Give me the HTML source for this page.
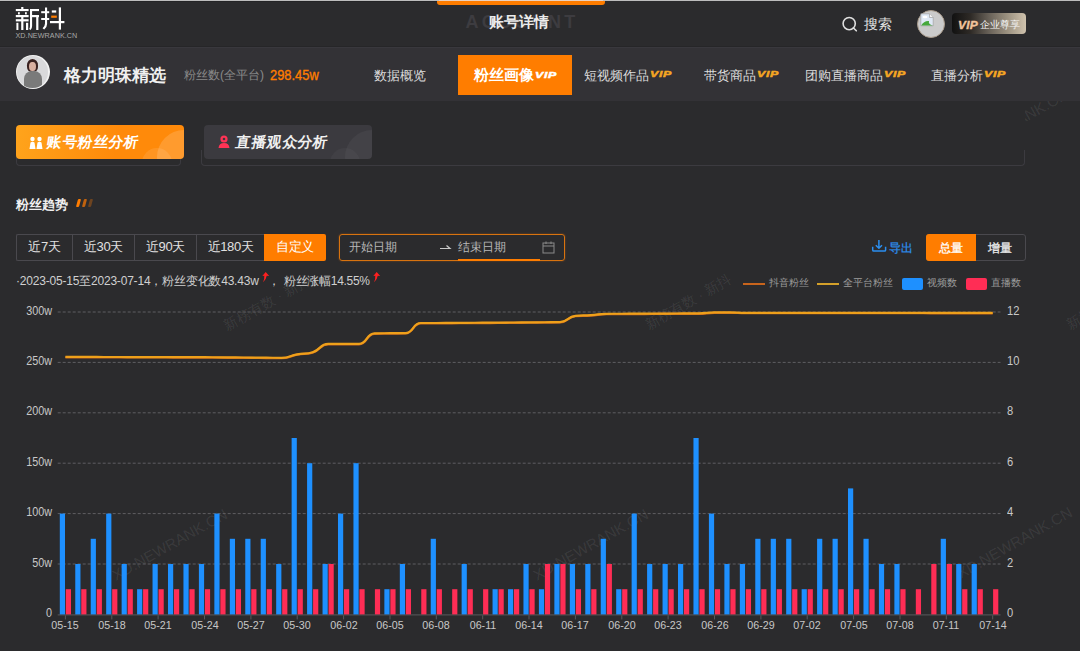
<!DOCTYPE html>
<html><head><meta charset="utf-8">
<style>
*{margin:0;padding:0;box-sizing:border-box}
html,body{width:1080px;height:651px;overflow:hidden;background:#2b2b2d;font-family:"Liberation Sans",sans-serif;color:#ddd}
.a{position:absolute;white-space:nowrap}
#top{position:absolute;left:0;top:0;width:1080px;height:47px;background:#2b2b2d;border-bottom:1px solid #262628}
#topline{position:absolute;left:0;top:0;width:1080px;height:1px;background:#bdbdbd}
#nav{position:absolute;left:0;top:47px;width:1080px;height:54px;background:#333236;border-top:1px solid #39383d}
.vip{display:inline-block;position:relative;top:-2.5px;font-style:italic;font-weight:bold;color:#f5a623;font-size:9.5px;letter-spacing:0.5px;-webkit-text-stroke:0.5px currentColor;transform:scaleX(1.3);transform-origin:0 50%;margin-left:1px}
.navi{position:absolute;top:66.5px;font-size:13.3px;line-height:18px;color:#dcdcdc}
.yl{position:absolute;left:0;width:52px;text-align:right;font-size:12px;line-height:14px;color:#c8c8c8;transform:scaleX(0.9);transform-origin:100% 50%}
.yr{position:absolute;left:1007px;font-size:12px;line-height:14px;color:#c8c8c8;transform:scaleX(0.93);transform-origin:0 50%}
.xl{position:absolute;top:618px;width:40px;text-align:center;font-size:11.5px;line-height:14px;color:#c8c8c8;transform:scaleX(0.93)}
.btn{position:absolute;top:234px;height:27px;font-size:13px;line-height:25px;text-align:center;color:#e0e0e0;letter-spacing:-0.35px}
.leg{position:absolute;top:276.3px;font-size:10px;line-height:13px;color:#9c9c9c}
.wm{position:absolute;color:rgba(255,255,255,0.07);font-size:14px;transform:rotate(-35deg);transform-origin:0 0;white-space:nowrap}
</style></head><body>
<div id="top"></div>
<div id="topline"></div>
<!-- logo -->
<svg class="a" style="left:0;top:0" width="80" height="45" viewBox="0 0 80 45" fill="#fff">
<rect x="21.2" y="7" width="2.2" height="2.5"/>
<rect x="15.8" y="9" width="12.8" height="2.1"/>
<rect x="18" y="12.2" width="1.8" height="2.2"/>
<rect x="25" y="12.2" width="1.8" height="2.2"/>
<rect x="15.8" y="15" width="12.8" height="2.2"/>
<rect x="15.8" y="19.2" width="12.8" height="2.2"/>
<rect x="21.2" y="17" width="2.2" height="13"/>
<rect x="16.4" y="22.8" width="2" height="7.2"/>
<rect x="26" y="22.8" width="2.2" height="7.2"/>
<rect x="30" y="9" width="9" height="2.1"/>
<path d="M30 9 H32.1 V26 Q32.1 28.5 30.6 30 L29.2 29 Q30 27.8 30 26z"/>
<rect x="32" y="15" width="7" height="2.2"/>
<rect x="36.2" y="17" width="2.2" height="13"/>
<rect x="41.2" y="11.2" width="8" height="2"/>
<rect x="41.2" y="18" width="8" height="2"/>
<path d="M45 7.4 H47.1 V24 Q47.1 27 44.2 29.6 L42.6 28.2 Q45 26 45 23.5z"/>
<rect x="51.8" y="10.4" width="4.4" height="2.2"/>
<rect x="51.2" y="15.6" width="5.6" height="2.2" fill="#ff7d00"/>
<rect x="50" y="21" width="14.4" height="2.2"/>
<rect x="58.8" y="7.4" width="2.2" height="22.2"/>
</svg>
<div class="a" style="left:15.5px;top:31.5px;font-size:7.2px;line-height:8px;color:#a8a8a8;letter-spacing:0.05px">XD.NEWRANK.CN</div>
<!-- center title -->
<div class="a" style="left:437px;top:0.5px;width:168px;height:4.5px;background:#ff7d00;border-radius:0 0 3px 3px"></div>
<div class="a" style="left:0;top:0;width:1080px;height:1px;background:#bdbdbd"></div>
<div class="a" style="left:439px;top:0;width:164px;height:1px;background:#ecd2bf"></div>
<div class="a" style="left:0;top:1px;width:437px;height:1px;background:#242426"></div>
<div class="a" style="left:465.5px;top:12.3px;font-size:18px;line-height:21px;font-weight:bold;color:#3d3c40;letter-spacing:3.3px">ACCOUNT</div>
<div class="a" style="left:488.5px;top:12px;font-size:15px;line-height:20px;font-weight:bold;color:#ebebeb">账号详情</div>
<!-- search -->
<svg class="a" style="left:840px;top:15px" width="20" height="20" viewBox="0 0 20 20"><circle cx="9.2" cy="8.6" r="6.1" fill="none" stroke="#e0e0e0" stroke-width="1.6"/><line x1="13.5" y1="13" x2="16.3" y2="15.8" stroke="#e0e0e0" stroke-width="1.6" stroke-linecap="round"/></svg>
<div class="a" style="left:864px;top:15px;font-size:14px;line-height:18px;color:#e0e0e0">搜索</div>
<div class="a" style="left:917px;top:10px;width:28px;height:28px;border-radius:50%;background:#cbcbcb;border:1px solid #a89a8a"></div>
<svg class="a" style="left:920px;top:13px" width="15" height="15" viewBox="0 0 15 15"><path d="M0.8 0.8 H9.5 L13.2 4.5 V12.8 H0.8z" fill="#dfe9f5" stroke="#a0a0a0" stroke-width="0.7"/><path d="M9.5 0.8 V4.5 H13.2" fill="#f4f4f4" stroke="#a0a0a0" stroke-width="0.7"/><path d="M1.2 12.5 Q4 7.5 9 8 Q8 11 12.8 12.5z" fill="#46a83c"/><ellipse cx="5" cy="4" rx="2.5" ry="1.2" fill="#fff"/></svg>
<div class="a" style="left:952px;top:13px;width:74px;height:21px;border-radius:4px;background:linear-gradient(90deg,#111 0%,#2e2a26 25%,#686158 50%,#9c9281 75%,#cfc2ad 100%)"></div>
<div class="a" style="left:957.5px;top:18.5px;font-size:11px;line-height:13px;font-weight:bold;font-style:italic;color:#f2c49c;-webkit-text-stroke:0.4px #f2c49c;letter-spacing:0.2px;transform:scaleX(1.08);transform-origin:0 50%">VIP</div>
<div class="a" style="left:979.5px;top:18px;font-size:9.8px;line-height:13px;color:#f2f2f2">企业尊享</div>

<!-- nav -->
<div id="nav"></div>
<div class="a" style="left:15.5px;top:55px;width:34px;height:34px;border-radius:50%;background:#f2f2f2"></div>
<div class="a" style="left:16.8px;top:56.3px;width:31.4px;height:31.4px;border-radius:50%;background:#d9d9db;overflow:hidden">
  <div style="position:absolute;left:9.8px;top:3px;width:11.5px;height:13px;border-radius:50% 50% 40% 40%;background:#3a2220"></div>
  <div style="position:absolute;left:12.5px;top:5.5px;width:6.5px;height:9.5px;border-radius:50%;background:#d9b0a0"></div>
  <div style="position:absolute;left:7.5px;top:14.5px;width:18px;height:20px;border-radius:8px 8px 2px 2px;background:#7a7a7a"></div>
</div>
<div class="a" style="left:63.5px;top:65.3px;font-size:16.8px;line-height:22px;font-weight:bold;color:#f0f0f0">格力明珠精选</div>
<div class="a" style="left:184px;top:67px;font-size:12px;line-height:16px;color:#8a8a8a">粉丝数(全平台)</div>
<div class="a" style="left:269.5px;top:67px;font-size:14px;line-height:17px;color:#ff7d00;-webkit-text-stroke:0.35px #ff7d00;transform:scaleX(0.92);transform-origin:0 50%">298.45w</div>

<div class="navi" style="left:374px">数据概览</div>
<div class="a" style="left:458px;top:54.5px;width:113.5px;height:40.5px;background:#ff7d00"></div>
<div class="a" style="left:474px;top:65px;font-size:15px;line-height:20px;font-weight:bold;color:#fff">粉丝画像<span class="vip" style="color:#fff">VIP</span></div>
<div class="navi" style="left:584px">短视频作品<span class="vip">VIP</span></div>
<div class="navi" style="left:704px">带货商品<span class="vip">VIP</span></div>
<div class="navi" style="left:805px">团购直播商品<span class="vip">VIP</span></div>
<div class="navi" style="left:931px">直播分析<span class="vip">VIP</span></div>

<!-- watermarks -->
<div class="a" style="left:0;top:101px;width:1080px;height:550px;overflow:hidden"><svg style="position:absolute;left:0;top:-101px" width="1080" height="651" viewBox="0 0 1080 651" font-family="Liberation Sans, sans-serif" fill="rgba(255,255,255,0.085)">
<text x="116" y="581" font-size="15.2" transform="rotate(-29.4 116 581)">XD.NEWRANK.CN</text>
<text x="537" y="581" font-size="15.2" transform="rotate(-29.4 537 581)">XD.NEWRANK.CN</text>
<text x="961" y="579" font-size="15.2" transform="rotate(-29.4 961 579)">XD.NEWRANK.CN</text>
<text x="957" y="161" font-size="15.2" transform="rotate(-29.4 957 161)">XD.NEWRANK.CN</text>
<text x="227.5" y="330.5" font-size="14" transform="rotate(-29.5 227.5 330.5)">新榜有数 · 新抖</text>
<text x="648.5" y="330" font-size="14" transform="rotate(-29.5 648.5 330)">新榜有数 · 新抖</text>
<text x="1069.5" y="330" font-size="14" transform="rotate(-29.5 1069.5 330)">新榜有数 · 新抖</text>
</svg></div>
<div class="a" style="left:0;top:101px;width:1025px;height:65px;background:#2b2b2d"></div>
<!-- tabs -->
<div class="a" style="left:201px;top:150px;width:824px;height:16px;border:1px solid #3c3b40;border-top:none;border-radius:0 0 4px 4px"></div>
<div class="a" style="left:16px;top:150px;width:165px;height:16px;border:1px solid #3c3b40;border-top:none;border-radius:0 0 4px 4px"></div>
<div class="a" style="left:16px;top:125px;width:168px;height:34px;border-radius:4px;background:linear-gradient(100deg,#ffa41c 0%,#ff8a0a 60%,#ff8a0a 100%);overflow:hidden">
  <div style="position:absolute;left:141px;top:5px;width:54px;height:54px;border-radius:50%;background:rgba(255,255,255,0.15)"></div>
  <div style="position:absolute;left:126px;top:23px;width:30px;height:30px;border-radius:50%;background:rgba(255,255,255,0.10)"></div>
</div>
<svg class="a" style="left:29px;top:135.5px" width="14" height="16" viewBox="0 0 14 16"><circle cx="3.5" cy="3" r="2.2" fill="#fff"/><circle cx="10.5" cy="3" r="2.2" fill="#fff"/><path d="M0.5 13 L1.5 6.5 Q3.5 5 5.5 6.5 L6.5 13z" fill="#fff"/><path d="M7.5 13 L8.5 6.5 Q10.5 5 12.5 6.5 L13.5 13z" fill="#fff"/></svg>
<div class="a" style="left:47px;top:132px;font-size:14.6px;line-height:20px;font-weight:900;color:#fff;letter-spacing:0.45px;transform:skewX(-9deg)">账号粉丝分析</div>
<div class="a" style="left:204px;top:125px;width:168px;height:34px;border-radius:4px;background:#3b3a3f;overflow:hidden">
  <div style="position:absolute;left:141px;top:5px;width:54px;height:54px;border-radius:50%;background:rgba(255,255,255,0.045)"></div>
  <div style="position:absolute;left:126px;top:23px;width:30px;height:30px;border-radius:50%;background:rgba(255,255,255,0.03)"></div>
</div>
<svg class="a" style="left:218px;top:135px" width="12" height="14" viewBox="0 0 12 14"><circle cx="6" cy="4" r="3.6" fill="#ff3355"/><circle cx="6" cy="4" r="1.3" fill="#3b3a3f"/><path d="M0.5 13 Q1 8 6 8 Q11 8 11.5 13z" fill="#ff3355"/></svg>
<div class="a" style="left:235.5px;top:132px;font-size:14.6px;line-height:20px;font-weight:900;color:#f0f0f0;letter-spacing:0.45px;transform:skewX(-9deg)">直播观众分析</div>

<!-- section title -->
<div class="a" style="left:16px;top:196px;font-size:13.2px;line-height:17px;font-weight:bold;color:#f0f0f0">粉丝趋势</div>
<div class="a" style="left:77px;top:199px;width:3px;height:8px;background:#ff7d00;transform:skewX(-15deg);border-radius:1px"></div>
<div class="a" style="left:83px;top:199px;width:3px;height:8px;background:#c0620e;transform:skewX(-15deg);border-radius:1px"></div>
<div class="a" style="left:89px;top:199px;width:3px;height:8px;background:#6e4420;transform:skewX(-15deg);border-radius:1px"></div>

<!-- date buttons -->
<div class="a" style="left:16px;top:234px;width:248px;height:27px;border:1px solid #4a494e;border-right:none;border-radius:2px 0 0 2px"></div>
<div class="a" style="left:72px;top:235px;width:1px;height:25px;background:#4a494e"></div>
<div class="a" style="left:134px;top:235px;width:1px;height:25px;background:#4a494e"></div>
<div class="a" style="left:196px;top:235px;width:1px;height:25px;background:#4a494e"></div>
<div class="btn" style="left:17px;width:55px">近7天</div>
<div class="btn" style="left:73px;width:61px">近30天</div>
<div class="btn" style="left:135px;width:61px">近90天</div>
<div class="btn" style="left:197px;width:67px">近180天</div>
<div class="btn" style="left:264px;width:62px;background:#ff7d00;color:#fff;border-radius:0 2px 2px 0">自定义</div>
<div class="a" style="left:339px;top:234px;width:226px;height:27px;border:1px solid #d8730f;border-radius:3px;box-shadow:0 0 2px rgba(255,125,0,0.45)"></div>
<div class="a" style="left:349px;top:240px;font-size:12px;line-height:15px;color:#b8b8b8">开始日期</div>
<svg class="a" style="left:438px;top:243px" width="14" height="8" viewBox="0 0 14 8"><path d="M2 5.5 H12 L8.5 2.5" fill="none" stroke="#c8c8c8" stroke-width="1.2"/></svg>
<div class="a" style="left:458px;top:240px;font-size:12px;line-height:15px;color:#b8b8b8">结束日期</div>
<div class="a" style="left:458px;top:259.2px;width:82px;height:2px;background:#ff7d00"></div>
<svg class="a" style="left:542px;top:241px" width="13" height="13" viewBox="0 0 13 13"><rect x="1" y="2" width="11" height="10" fill="none" stroke="#8a8a8a" stroke-width="1"/><line x1="1" y1="5" x2="12" y2="5" stroke="#8a8a8a"/><line x1="4" y1="0.5" x2="4" y2="3" stroke="#8a8a8a"/><line x1="9" y1="0.5" x2="9" y2="3" stroke="#8a8a8a"/></svg>

<div class="a" style="left:16px;top:273.5px;font-size:12px;line-height:15px;color:#d0d0d0;letter-spacing:-0.2px">·2023-05-15至2023-07-14，粉丝变化数43.43w</div>
<svg class="a" style="left:262px;top:271.5px" width="8" height="11" viewBox="0 0 8 11"><path d="M3.7 0 L7.2 3.9 L4.7 3.7 Q4.3 7.6 1.1 10.2 Q2.5 7.3 2.3 3.7 L0.3 3.9z" fill="#ff2020"/></svg>
<div class="a" style="left:268px;top:273.5px;font-size:12px;line-height:15px;color:#d0d0d0">，</div>
<div class="a" style="left:284px;top:273.5px;font-size:12px;line-height:15px;color:#d0d0d0;letter-spacing:-0.3px">粉丝涨幅14.55%</div>
<svg class="a" style="left:373px;top:271.5px" width="8" height="11" viewBox="0 0 8 11"><path d="M3.7 0 L7.2 3.9 L4.7 3.7 Q4.3 7.6 1.1 10.2 Q2.5 7.3 2.3 3.7 L0.3 3.9z" fill="#ff2020"/></svg>

<!-- export / total -->
<svg class="a" style="left:870px;top:238px" width="18" height="16" viewBox="0 0 18 16"><path d="M8.9 2 V10.2 M5.8 7.2 L8.9 10.2 L12 7.2" fill="none" stroke="#2b8ff0" stroke-width="1.5" stroke-linejoin="round"/><path d="M2.7 8.8 V12 Q2.7 13.1 3.8 13.1 H14.5 Q15.6 13.1 15.6 12 V8.8" fill="none" stroke="#2b8ff0" stroke-width="1.5"/></svg>
<div class="a" style="left:888.5px;top:240.5px;font-size:12px;line-height:15px;-webkit-text-stroke:0.25px #2b8ff0;color:#2b8ff0">导出</div>
<div class="a" style="left:926px;top:234px;width:100px;height:27px;border:1px solid #4a494e;border-radius:3px"></div>
<div class="a" style="left:926px;top:234px;width:50px;height:27px;background:#ff7d00;border-radius:3px 0 0 3px"></div>
<div class="a" style="left:939px;top:241px;font-size:12px;line-height:15px;-webkit-text-stroke:0.3px #fff;color:#fff">总量</div>
<div class="a" style="left:988px;top:241px;font-size:12px;line-height:15px;-webkit-text-stroke:0.3px #f0f0f0;color:#f0f0f0">增量</div>

<!-- legend -->
<div class="a" style="left:743px;top:283px;width:22px;height:2px;background:#c8641c"></div>
<div class="leg" style="left:769px">抖音粉丝</div>
<div class="a" style="left:817px;top:283px;width:22px;height:2px;background:#d4a02a"></div>
<div class="leg" style="left:843px">全平台粉丝</div>
<div class="a" style="left:902px;top:278px;width:21px;height:12px;background:#1e90ff;border-radius:2px"></div>
<div class="leg" style="left:927px">视频数</div>
<div class="a" style="left:966px;top:278px;width:21px;height:12px;background:#ff2d55;border-radius:2px"></div>
<div class="leg" style="left:991px">直播数</div>

<!-- chart -->
<svg class="a" style="left:0;top:0" width="1080" height="651" viewBox="0 0 1080 651">
<line x1="57.7" y1="564.0" x2="1000.5" y2="564.0" stroke="#5f5e62" stroke-width="1" stroke-dasharray="3,2"/>
<line x1="57.7" y1="513.6" x2="1000.5" y2="513.6" stroke="#5f5e62" stroke-width="1" stroke-dasharray="3,2"/>
<line x1="57.7" y1="463.2" x2="1000.5" y2="463.2" stroke="#5f5e62" stroke-width="1" stroke-dasharray="3,2"/>
<line x1="57.7" y1="412.8" x2="1000.5" y2="412.8" stroke="#5f5e62" stroke-width="1" stroke-dasharray="3,2"/>
<line x1="57.7" y1="362.4" x2="1000.5" y2="362.4" stroke="#5f5e62" stroke-width="1" stroke-dasharray="3,2"/>
<line x1="57.7" y1="312.0" x2="1000.5" y2="312.0" stroke="#5f5e62" stroke-width="1" stroke-dasharray="3,2"/>
<line x1="57.7" y1="614.9" x2="1000.5" y2="614.9" stroke="#5a595d" stroke-width="1"/>
<line x1="65.4" y1="615.4" x2="65.4" y2="619.4" stroke="#5a595d" stroke-width="1"/>
<line x1="111.8" y1="615.4" x2="111.8" y2="619.4" stroke="#5a595d" stroke-width="1"/>
<line x1="158.1" y1="615.4" x2="158.1" y2="619.4" stroke="#5a595d" stroke-width="1"/>
<line x1="204.5" y1="615.4" x2="204.5" y2="619.4" stroke="#5a595d" stroke-width="1"/>
<line x1="250.9" y1="615.4" x2="250.9" y2="619.4" stroke="#5a595d" stroke-width="1"/>
<line x1="297.2" y1="615.4" x2="297.2" y2="619.4" stroke="#5a595d" stroke-width="1"/>
<line x1="343.6" y1="615.4" x2="343.6" y2="619.4" stroke="#5a595d" stroke-width="1"/>
<line x1="390.0" y1="615.4" x2="390.0" y2="619.4" stroke="#5a595d" stroke-width="1"/>
<line x1="436.3" y1="615.4" x2="436.3" y2="619.4" stroke="#5a595d" stroke-width="1"/>
<line x1="482.7" y1="615.4" x2="482.7" y2="619.4" stroke="#5a595d" stroke-width="1"/>
<line x1="529.0" y1="615.4" x2="529.0" y2="619.4" stroke="#5a595d" stroke-width="1"/>
<line x1="575.4" y1="615.4" x2="575.4" y2="619.4" stroke="#5a595d" stroke-width="1"/>
<line x1="621.8" y1="615.4" x2="621.8" y2="619.4" stroke="#5a595d" stroke-width="1"/>
<line x1="668.1" y1="615.4" x2="668.1" y2="619.4" stroke="#5a595d" stroke-width="1"/>
<line x1="714.5" y1="615.4" x2="714.5" y2="619.4" stroke="#5a595d" stroke-width="1"/>
<line x1="760.9" y1="615.4" x2="760.9" y2="619.4" stroke="#5a595d" stroke-width="1"/>
<line x1="807.2" y1="615.4" x2="807.2" y2="619.4" stroke="#5a595d" stroke-width="1"/>
<line x1="853.6" y1="615.4" x2="853.6" y2="619.4" stroke="#5a595d" stroke-width="1"/>
<line x1="900.0" y1="615.4" x2="900.0" y2="619.4" stroke="#5a595d" stroke-width="1"/>
<line x1="946.3" y1="615.4" x2="946.3" y2="619.4" stroke="#5a595d" stroke-width="1"/>
<line x1="992.7" y1="615.4" x2="992.7" y2="619.4" stroke="#5a595d" stroke-width="1"/>
<rect x="59.80" y="513.60" width="5.2" height="100.80" fill="#1e90ff"/>
<rect x="65.80" y="589.20" width="5.2" height="25.20" fill="#ff2d55"/>
<rect x="75.26" y="564.00" width="5.2" height="50.40" fill="#1e90ff"/>
<rect x="81.26" y="589.20" width="5.2" height="25.20" fill="#ff2d55"/>
<rect x="90.71" y="538.80" width="5.2" height="75.60" fill="#1e90ff"/>
<rect x="96.71" y="589.20" width="5.2" height="25.20" fill="#ff2d55"/>
<rect x="106.17" y="513.60" width="5.2" height="100.80" fill="#1e90ff"/>
<rect x="112.17" y="589.20" width="5.2" height="25.20" fill="#ff2d55"/>
<rect x="121.62" y="564.00" width="5.2" height="50.40" fill="#1e90ff"/>
<rect x="127.62" y="589.20" width="5.2" height="25.20" fill="#ff2d55"/>
<rect x="137.08" y="589.20" width="5.2" height="25.20" fill="#1e90ff"/>
<rect x="143.08" y="589.20" width="5.2" height="25.20" fill="#ff2d55"/>
<rect x="152.53" y="564.00" width="5.2" height="50.40" fill="#1e90ff"/>
<rect x="158.53" y="589.20" width="5.2" height="25.20" fill="#ff2d55"/>
<rect x="167.99" y="564.00" width="5.2" height="50.40" fill="#1e90ff"/>
<rect x="173.99" y="589.20" width="5.2" height="25.20" fill="#ff2d55"/>
<rect x="183.44" y="564.00" width="5.2" height="50.40" fill="#1e90ff"/>
<rect x="189.44" y="589.20" width="5.2" height="25.20" fill="#ff2d55"/>
<rect x="198.90" y="564.00" width="5.2" height="50.40" fill="#1e90ff"/>
<rect x="204.90" y="589.20" width="5.2" height="25.20" fill="#ff2d55"/>
<rect x="214.35" y="513.60" width="5.2" height="100.80" fill="#1e90ff"/>
<rect x="220.35" y="589.20" width="5.2" height="25.20" fill="#ff2d55"/>
<rect x="229.81" y="538.80" width="5.2" height="75.60" fill="#1e90ff"/>
<rect x="235.81" y="589.20" width="5.2" height="25.20" fill="#ff2d55"/>
<rect x="245.26" y="538.80" width="5.2" height="75.60" fill="#1e90ff"/>
<rect x="251.26" y="589.20" width="5.2" height="25.20" fill="#ff2d55"/>
<rect x="260.71" y="538.80" width="5.2" height="75.60" fill="#1e90ff"/>
<rect x="266.71" y="589.20" width="5.2" height="25.20" fill="#ff2d55"/>
<rect x="276.17" y="564.00" width="5.2" height="50.40" fill="#1e90ff"/>
<rect x="282.17" y="589.20" width="5.2" height="25.20" fill="#ff2d55"/>
<rect x="291.62" y="438.00" width="5.2" height="176.40" fill="#1e90ff"/>
<rect x="297.62" y="589.20" width="5.2" height="25.20" fill="#ff2d55"/>
<rect x="307.08" y="463.20" width="5.2" height="151.20" fill="#1e90ff"/>
<rect x="313.08" y="589.20" width="5.2" height="25.20" fill="#ff2d55"/>
<rect x="322.53" y="564.00" width="5.2" height="50.40" fill="#1e90ff"/>
<rect x="328.53" y="564.00" width="5.2" height="50.40" fill="#ff2d55"/>
<rect x="337.99" y="513.60" width="5.2" height="100.80" fill="#1e90ff"/>
<rect x="343.99" y="589.20" width="5.2" height="25.20" fill="#ff2d55"/>
<rect x="353.44" y="463.20" width="5.2" height="151.20" fill="#1e90ff"/>
<rect x="359.44" y="589.20" width="5.2" height="25.20" fill="#ff2d55"/>
<rect x="374.90" y="589.20" width="5.2" height="25.20" fill="#ff2d55"/>
<rect x="384.36" y="589.20" width="5.2" height="25.20" fill="#1e90ff"/>
<rect x="390.36" y="589.20" width="5.2" height="25.20" fill="#ff2d55"/>
<rect x="399.81" y="564.00" width="5.2" height="50.40" fill="#1e90ff"/>
<rect x="405.81" y="589.20" width="5.2" height="25.20" fill="#ff2d55"/>
<rect x="421.26" y="589.20" width="5.2" height="25.20" fill="#ff2d55"/>
<rect x="430.72" y="538.80" width="5.2" height="75.60" fill="#1e90ff"/>
<rect x="436.72" y="589.20" width="5.2" height="25.20" fill="#ff2d55"/>
<rect x="452.17" y="589.20" width="5.2" height="25.20" fill="#ff2d55"/>
<rect x="461.63" y="564.00" width="5.2" height="50.40" fill="#1e90ff"/>
<rect x="467.63" y="589.20" width="5.2" height="25.20" fill="#ff2d55"/>
<rect x="483.09" y="589.20" width="5.2" height="25.20" fill="#ff2d55"/>
<rect x="492.54" y="589.20" width="5.2" height="25.20" fill="#1e90ff"/>
<rect x="498.54" y="589.20" width="5.2" height="25.20" fill="#ff2d55"/>
<rect x="508.00" y="589.20" width="5.2" height="25.20" fill="#1e90ff"/>
<rect x="514.00" y="589.20" width="5.2" height="25.20" fill="#ff2d55"/>
<rect x="523.45" y="564.00" width="5.2" height="50.40" fill="#1e90ff"/>
<rect x="529.45" y="589.20" width="5.2" height="25.20" fill="#ff2d55"/>
<rect x="538.90" y="589.20" width="5.2" height="25.20" fill="#1e90ff"/>
<rect x="544.90" y="564.00" width="5.2" height="50.40" fill="#ff2d55"/>
<rect x="554.36" y="564.00" width="5.2" height="50.40" fill="#1e90ff"/>
<rect x="560.36" y="564.00" width="5.2" height="50.40" fill="#ff2d55"/>
<rect x="569.81" y="564.00" width="5.2" height="50.40" fill="#1e90ff"/>
<rect x="575.81" y="589.20" width="5.2" height="25.20" fill="#ff2d55"/>
<rect x="585.27" y="564.00" width="5.2" height="50.40" fill="#1e90ff"/>
<rect x="591.27" y="589.20" width="5.2" height="25.20" fill="#ff2d55"/>
<rect x="600.72" y="538.80" width="5.2" height="75.60" fill="#1e90ff"/>
<rect x="606.72" y="564.00" width="5.2" height="50.40" fill="#ff2d55"/>
<rect x="616.18" y="589.20" width="5.2" height="25.20" fill="#1e90ff"/>
<rect x="622.18" y="589.20" width="5.2" height="25.20" fill="#ff2d55"/>
<rect x="631.63" y="513.60" width="5.2" height="100.80" fill="#1e90ff"/>
<rect x="637.63" y="589.20" width="5.2" height="25.20" fill="#ff2d55"/>
<rect x="647.09" y="564.00" width="5.2" height="50.40" fill="#1e90ff"/>
<rect x="653.09" y="589.20" width="5.2" height="25.20" fill="#ff2d55"/>
<rect x="662.54" y="564.00" width="5.2" height="50.40" fill="#1e90ff"/>
<rect x="668.54" y="589.20" width="5.2" height="25.20" fill="#ff2d55"/>
<rect x="678.00" y="564.00" width="5.2" height="50.40" fill="#1e90ff"/>
<rect x="684.00" y="589.20" width="5.2" height="25.20" fill="#ff2d55"/>
<rect x="693.45" y="438.00" width="5.2" height="176.40" fill="#1e90ff"/>
<rect x="699.45" y="589.20" width="5.2" height="25.20" fill="#ff2d55"/>
<rect x="708.91" y="513.60" width="5.2" height="100.80" fill="#1e90ff"/>
<rect x="714.91" y="589.20" width="5.2" height="25.20" fill="#ff2d55"/>
<rect x="724.37" y="564.00" width="5.2" height="50.40" fill="#1e90ff"/>
<rect x="730.37" y="589.20" width="5.2" height="25.20" fill="#ff2d55"/>
<rect x="739.82" y="564.00" width="5.2" height="50.40" fill="#1e90ff"/>
<rect x="745.82" y="589.20" width="5.2" height="25.20" fill="#ff2d55"/>
<rect x="755.27" y="538.80" width="5.2" height="75.60" fill="#1e90ff"/>
<rect x="761.27" y="589.20" width="5.2" height="25.20" fill="#ff2d55"/>
<rect x="770.73" y="538.80" width="5.2" height="75.60" fill="#1e90ff"/>
<rect x="776.73" y="589.20" width="5.2" height="25.20" fill="#ff2d55"/>
<rect x="786.18" y="538.80" width="5.2" height="75.60" fill="#1e90ff"/>
<rect x="792.18" y="589.20" width="5.2" height="25.20" fill="#ff2d55"/>
<rect x="801.64" y="589.20" width="5.2" height="25.20" fill="#1e90ff"/>
<rect x="807.64" y="589.20" width="5.2" height="25.20" fill="#ff2d55"/>
<rect x="817.09" y="538.80" width="5.2" height="75.60" fill="#1e90ff"/>
<rect x="823.09" y="589.20" width="5.2" height="25.20" fill="#ff2d55"/>
<rect x="832.55" y="538.80" width="5.2" height="75.60" fill="#1e90ff"/>
<rect x="838.55" y="589.20" width="5.2" height="25.20" fill="#ff2d55"/>
<rect x="848.00" y="488.40" width="5.2" height="126.00" fill="#1e90ff"/>
<rect x="854.00" y="589.20" width="5.2" height="25.20" fill="#ff2d55"/>
<rect x="863.46" y="538.80" width="5.2" height="75.60" fill="#1e90ff"/>
<rect x="869.46" y="589.20" width="5.2" height="25.20" fill="#ff2d55"/>
<rect x="878.91" y="564.00" width="5.2" height="50.40" fill="#1e90ff"/>
<rect x="884.91" y="589.20" width="5.2" height="25.20" fill="#ff2d55"/>
<rect x="894.37" y="564.00" width="5.2" height="50.40" fill="#1e90ff"/>
<rect x="900.37" y="589.20" width="5.2" height="25.20" fill="#ff2d55"/>
<rect x="915.82" y="589.20" width="5.2" height="25.20" fill="#ff2d55"/>
<rect x="931.28" y="564.00" width="5.2" height="50.40" fill="#ff2d55"/>
<rect x="940.74" y="538.80" width="5.2" height="75.60" fill="#1e90ff"/>
<rect x="946.74" y="564.00" width="5.2" height="50.40" fill="#ff2d55"/>
<rect x="956.19" y="564.00" width="5.2" height="50.40" fill="#1e90ff"/>
<rect x="962.19" y="589.20" width="5.2" height="25.20" fill="#ff2d55"/>
<rect x="971.64" y="564.00" width="5.2" height="50.40" fill="#1e90ff"/>
<rect x="977.64" y="589.20" width="5.2" height="25.20" fill="#ff2d55"/>
<rect x="993.10" y="589.20" width="5.2" height="25.20" fill="#ff2d55"/>
<path d="M65.40,356.90 C65.40,356.90 73.13,356.92 80.86,356.93 C88.58,356.95 88.58,356.95 96.31,356.97 C104.04,356.98 104.04,356.98 111.77,357.00 C119.49,357.02 119.49,357.02 127.22,357.03 C134.95,357.05 134.95,357.05 142.68,357.07 C150.40,357.08 150.40,357.08 158.13,357.10 C165.86,357.12 165.86,357.12 173.59,357.13 C181.31,357.15 181.31,357.15 189.04,357.17 C196.77,357.18 196.77,357.17 204.50,357.20 C212.22,357.23 212.22,357.26 219.95,357.32 C227.68,357.38 227.68,357.38 235.41,357.44 C243.13,357.50 243.13,357.50 250.86,357.56 C258.59,357.62 258.59,357.62 266.31,357.68 C274.04,357.74 274.14,357.80 281.77,357.80 C289.59,357.80 289.44,355.71 297.23,354.30 C304.89,352.91 305.41,354.30 312.68,352.20 C320.86,349.84 319.92,343.90 328.13,343.90 C335.37,343.90 335.86,343.90 343.59,343.90 C351.32,343.90 352.05,343.90 359.04,343.90 C367.50,343.90 366.04,333.64 374.50,333.40 C381.50,333.20 382.23,333.28 389.96,333.20 C397.68,333.13 398.37,333.20 405.41,333.10 C413.82,332.98 412.45,323.00 420.87,323.00 C427.91,323.00 428.59,323.00 436.32,323.00 C444.05,323.00 444.05,322.95 451.77,322.90 C459.50,322.85 459.50,322.85 467.23,322.80 C474.96,322.75 474.96,322.75 482.69,322.70 C490.41,322.65 490.41,322.66 498.14,322.60 C505.87,322.54 505.87,322.54 513.60,322.48 C521.32,322.41 521.32,322.41 529.05,322.35 C536.78,322.29 536.78,322.29 544.50,322.23 C552.23,322.16 552.53,322.23 559.96,322.10 C567.98,321.97 567.39,316.45 575.41,315.80 C582.85,315.20 583.16,315.70 590.87,315.20 C598.61,314.70 598.58,313.87 606.32,313.80 C614.04,313.73 614.05,313.77 621.78,313.73 C629.51,313.70 629.51,313.70 637.24,313.67 C644.96,313.63 644.96,313.63 652.69,313.60 C660.42,313.57 660.42,313.57 668.14,313.53 C675.87,313.50 675.87,313.50 683.60,313.47 C691.33,313.43 691.34,313.47 699.05,313.40 C706.79,313.33 706.77,312.40 714.51,312.40 C722.23,312.40 722.24,312.40 729.97,312.40 C737.69,312.40 737.69,312.79 745.42,312.80 C753.15,312.81 753.15,312.80 760.88,312.81 C768.60,312.81 768.60,312.81 776.33,312.81 C784.06,312.82 784.06,312.82 791.78,312.82 C799.51,312.82 799.51,312.82 807.24,312.82 C814.97,312.83 814.97,312.83 822.69,312.83 C830.42,312.83 830.42,312.83 838.15,312.84 C845.88,312.84 845.88,312.84 853.61,312.84 C861.33,312.85 861.33,312.85 869.06,312.85 C876.79,312.85 876.79,312.85 884.51,312.86 C892.24,312.86 892.24,312.86 899.97,312.86 C907.70,312.87 907.70,312.87 915.42,312.87 C923.15,312.87 923.15,312.87 930.88,312.88 C938.61,312.88 938.61,312.88 946.34,312.88 C954.06,312.88 954.06,312.88 961.79,312.89 C969.52,312.89 969.52,312.89 977.25,312.89 C984.97,312.90 992.70,312.90 992.70,312.90" fill="none" stroke="#c8641c" stroke-width="2.2" transform="translate(0,0.4)"/>
<path d="M65.40,356.90 C65.40,356.90 73.13,356.92 80.86,356.93 C88.58,356.95 88.58,356.95 96.31,356.97 C104.04,356.98 104.04,356.98 111.77,357.00 C119.49,357.02 119.49,357.02 127.22,357.03 C134.95,357.05 134.95,357.05 142.68,357.07 C150.40,357.08 150.40,357.08 158.13,357.10 C165.86,357.12 165.86,357.12 173.59,357.13 C181.31,357.15 181.31,357.15 189.04,357.17 C196.77,357.18 196.77,357.17 204.50,357.20 C212.22,357.23 212.22,357.26 219.95,357.32 C227.68,357.38 227.68,357.38 235.41,357.44 C243.13,357.50 243.13,357.50 250.86,357.56 C258.59,357.62 258.59,357.62 266.31,357.68 C274.04,357.74 274.14,357.80 281.77,357.80 C289.59,357.80 289.44,355.71 297.23,354.30 C304.89,352.91 305.41,354.30 312.68,352.20 C320.86,349.84 319.92,343.90 328.13,343.90 C335.37,343.90 335.86,343.90 343.59,343.90 C351.32,343.90 352.05,343.90 359.04,343.90 C367.50,343.90 366.04,333.64 374.50,333.40 C381.50,333.20 382.23,333.28 389.96,333.20 C397.68,333.13 398.37,333.20 405.41,333.10 C413.82,332.98 412.45,323.00 420.87,323.00 C427.91,323.00 428.59,323.00 436.32,323.00 C444.05,323.00 444.05,322.95 451.77,322.90 C459.50,322.85 459.50,322.85 467.23,322.80 C474.96,322.75 474.96,322.75 482.69,322.70 C490.41,322.65 490.41,322.66 498.14,322.60 C505.87,322.54 505.87,322.54 513.60,322.48 C521.32,322.41 521.32,322.41 529.05,322.35 C536.78,322.29 536.78,322.29 544.50,322.23 C552.23,322.16 552.53,322.23 559.96,322.10 C567.98,321.97 567.39,316.45 575.41,315.80 C582.85,315.20 583.16,315.70 590.87,315.20 C598.61,314.70 598.58,313.87 606.32,313.80 C614.04,313.73 614.05,313.77 621.78,313.73 C629.51,313.70 629.51,313.70 637.24,313.67 C644.96,313.63 644.96,313.63 652.69,313.60 C660.42,313.57 660.42,313.57 668.14,313.53 C675.87,313.50 675.87,313.50 683.60,313.47 C691.33,313.43 691.34,313.47 699.05,313.40 C706.79,313.33 706.77,312.40 714.51,312.40 C722.23,312.40 722.24,312.40 729.97,312.40 C737.69,312.40 737.69,312.79 745.42,312.80 C753.15,312.81 753.15,312.80 760.88,312.81 C768.60,312.81 768.60,312.81 776.33,312.81 C784.06,312.82 784.06,312.82 791.78,312.82 C799.51,312.82 799.51,312.82 807.24,312.82 C814.97,312.83 814.97,312.83 822.69,312.83 C830.42,312.83 830.42,312.83 838.15,312.84 C845.88,312.84 845.88,312.84 853.61,312.84 C861.33,312.85 861.33,312.85 869.06,312.85 C876.79,312.85 876.79,312.85 884.51,312.86 C892.24,312.86 892.24,312.86 899.97,312.86 C907.70,312.87 907.70,312.87 915.42,312.87 C923.15,312.87 923.15,312.87 930.88,312.88 C938.61,312.88 938.61,312.88 946.34,312.88 C954.06,312.88 954.06,312.88 961.79,312.89 C969.52,312.89 969.52,312.89 977.25,312.89 C984.97,312.90 992.70,312.90 992.70,312.90" fill="none" stroke="#eea01a" stroke-width="2.2"/>
</svg>
<div class="yl" style="top:605.9px">0</div>
<div class="yr" style="top:605.9px">0</div>
<div class="yl" style="top:555.5px">50w</div>
<div class="yr" style="top:555.5px">2</div>
<div class="yl" style="top:505.1px">100w</div>
<div class="yr" style="top:505.1px">4</div>
<div class="yl" style="top:454.7px">150w</div>
<div class="yr" style="top:454.7px">6</div>
<div class="yl" style="top:404.3px">200w</div>
<div class="yr" style="top:404.3px">8</div>
<div class="yl" style="top:353.9px">250w</div>
<div class="yr" style="top:353.9px">10</div>
<div class="yl" style="top:303.5px">300w</div>
<div class="yr" style="top:303.5px">12</div>
<div class="xl" style="left:45.4px">05-15</div>
<div class="xl" style="left:91.8px">05-18</div>
<div class="xl" style="left:138.1px">05-21</div>
<div class="xl" style="left:184.5px">05-24</div>
<div class="xl" style="left:230.9px">05-27</div>
<div class="xl" style="left:277.2px">05-30</div>
<div class="xl" style="left:323.6px">06-02</div>
<div class="xl" style="left:370.0px">06-05</div>
<div class="xl" style="left:416.3px">06-08</div>
<div class="xl" style="left:462.7px">06-11</div>
<div class="xl" style="left:509.0px">06-14</div>
<div class="xl" style="left:555.4px">06-17</div>
<div class="xl" style="left:601.8px">06-20</div>
<div class="xl" style="left:648.1px">06-23</div>
<div class="xl" style="left:694.5px">06-26</div>
<div class="xl" style="left:740.9px">06-29</div>
<div class="xl" style="left:787.2px">07-02</div>
<div class="xl" style="left:833.6px">07-05</div>
<div class="xl" style="left:880.0px">07-08</div>
<div class="xl" style="left:926.3px">07-11</div>
<div class="xl" style="left:972.7px">07-14</div>

</body></html>
